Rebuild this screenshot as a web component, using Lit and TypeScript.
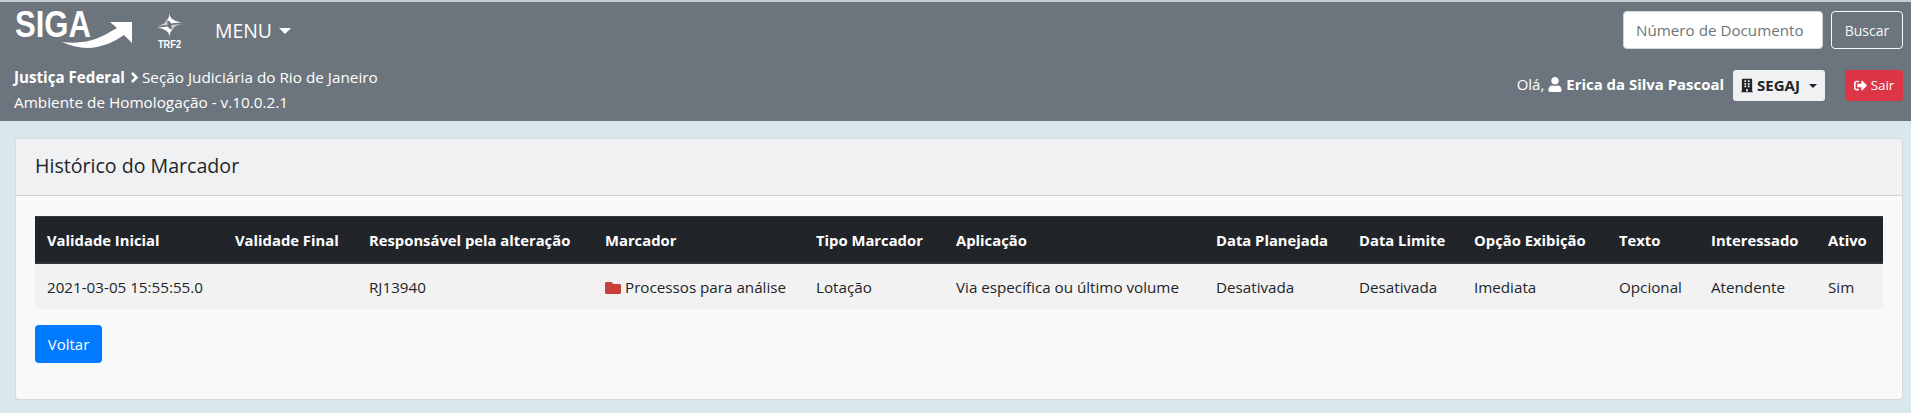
import { LitElement, html, css } from 'lit';
import { customElement } from 'lit/decorators.js';

interface Column {
  title: string;
  width: number;
}

const COLUMNS: Column[] = [
  { title: 'Validade Inicial', width: 188 },
  { title: 'Validade Final', width: 134 },
  { title: 'Responsável pela alteração', width: 236 },
  { title: 'Marcador', width: 211 },
  { title: 'Tipo Marcador', width: 140 },
  { title: 'Aplicação', width: 260 },
  { title: 'Data Planejada', width: 143 },
  { title: 'Data Limite', width: 115 },
  { title: 'Opção Exibição', width: 145 },
  { title: 'Texto', width: 92 },
  { title: 'Interessado', width: 117 },
  { title: 'Ativo', width: 67 },
];

const ROW = [
  '2021-03-05 15:55:55.0',
  '',
  'RJ13940',
  'Processos para análise',
  'Lotação',
  'Via específica ou último volume',
  'Desativada',
  'Desativada',
  'Imediata',
  'Opcional',
  'Atendente',
  'Sim',
];

const icon = (box: string, d: string, cls = 'icon') =>
  html`<svg class=${cls} viewBox=${box} fill="currentColor"><path d=${d}></path></svg>`;

const USER =
  'M224 256c70.7 0 128-57.3 128-128S294.7 0 224 0 96 57.3 96 128s57.3 128 128 128zm89.6 32h-16.7c-22.2 10.2-46.9 16-72.9 16s-50.6-5.8-72.9-16h-16.7C60.2 288 0 348.2 0 422.4V464c0 26.5 21.5 48 48 48h352c26.5 0 48-21.5 48-48v-41.6c0-74.2-60.2-134.4-134.4-134.4z';
const FOLDER =
  'M464 128H272l-64-64H48C21.49 64 0 85.49 0 112v288c0 26.51 21.49 48 48 48h416c26.51 0 48-21.49 48-48V176c0-26.51-21.49-48-48-48z';
const BUILDING =
  'M436 480h-20V24c0-13.255-10.745-24-24-24H56C42.745 0 32 10.745 32 24v456H12c-6.627 0-12 5.373-12 12v20h448v-20c0-6.627-5.373-12-12-12zM128 76c0-6.627 5.373-12 12-12h40c6.627 0 12 5.373 12 12v40c0 6.627-5.373 12-12 12h-40c-6.627 0-12-5.373-12-12V76zm0 96c0-6.627 5.373-12 12-12h40c6.627 0 12 5.373 12 12v40c0 6.627-5.373 12-12 12h-40c-6.627 0-12-5.373-12-12v-40zm52 148h-40c-6.627 0-12-5.373-12-12v-40c0-6.627 5.373-12 12-12h40c6.627 0 12 5.373 12 12v40c0 6.627-5.373 12-12 12zm76 160h-64v-84c0-6.627 5.373-12 12-12h40c6.627 0 12 5.373 12 12v84zm64-172c0 6.627-5.373 12-12 12h-40c-6.627 0-12-5.373-12-12v-40c0-6.627 5.373-12 12-12h40c6.627 0 12 5.373 12 12v40zm0-96c0 6.627-5.373 12-12 12h-40c-6.627 0-12-5.373-12-12v-40c0-6.627 5.373-12 12-12h40c6.627 0 12 5.373 12 12v40zm0-96c0 6.627-5.373 12-12 12h-40c-6.627 0-12-5.373-12-12V76c0-6.627 5.373-12 12-12h40c6.627 0 12 5.373 12 12v40z';
const SIGN_OUT =
  'M497 273L329 441c-15 15-41 4.5-41-17v-96H152c-13.3 0-24-10.7-24-24v-96c0-13.3 10.7-24 24-24h136V88c0-21.4 25.9-32 41-17l168 168c9.3 9.4 9.3 24.6 0 34zM192 436v-40c0-6.6-5.4-12-12-12H96c-17.7 0-32-14.3-32-32V160c0-17.7 14.3-32 32-32h84c6.6 0 12-5.4 12-12V76c0-6.6-5.4-12-12-12H96c-53 0-96 43-96 96v192c0 53 43 96 96 96h84c6.6 0 12-5.4 12-12z';

@customElement('app-root')
export class AppRoot extends LitElement {
  static styles = css`
    :host {
      display: block;
      min-height: 413px;
      background: #d9e8ea;
      color: #212529;
      font-family: 'Open Sans', 'Noto Sans', sans-serif;
      font-size: 15.2px;
      line-height: 21px;
    }
    .topbar {
      height: 121px;
      box-sizing: border-box;
      background: #6c757d;
      border-top: 2px solid #c9ced2;
      color: #fff;
      padding: 9px 8px 0 14px;
      display: flex;
      flex-direction: column;
    }
    .row {
      display: flex;
      justify-content: space-between;
    }
    .brand {
      display: flex;
      align-items: flex-start;
    }
    .logo {
      width: 122px;
      height: 48px;
      margin-top: -11px;
      overflow: visible;
    }
    .logo text {
      font-family: 'Liberation Sans', sans-serif;
      font-weight: 700;
      fill: #fff;
    }
    .trf {
      width: 30px;
      height: 48px;
      margin: -1px 0 0 20px;
    }
    .trf text {
      font-family: 'Liberation Sans', sans-serif;
      font-weight: 700;
      font-size: 10px;
      fill: #fff;
    }
    .menu {
      margin: 6px 0 0 29px;
      font-size: 19.4px;
      line-height: 27px;
      display: flex;
      align-items: center;
      gap: 7px;
    }
    .caret {
      display: inline-block;
      width: 0;
      height: 0;
      border-top: 6px solid currentColor;
      border-left: 6px solid transparent;
      border-right: 6px solid transparent;
    }
    .search {
      display: flex;
      gap: 8px;
    }
    .search input {
      width: 200px;
      height: 38px;
      box-sizing: border-box;
      border: 1px solid #ced4da;
      border-radius: 4px;
      padding: 0 12px;
      background: #fff;
      font: inherit;
      font-size: 15.2px;
    }
    .search input::placeholder {
      color: #6c757d;
    }
    .btn-outline {
      width: 72px;
      height: 38px;
      box-sizing: border-box;
      border: 1px solid #f8f9fa;
      border-radius: 4px;
      background: transparent;
      color: #f8f9fa;
      font: inherit;
      font-size: 14px;
      padding: 0;
    }
    .info {
      margin-top: 1px;
      align-items: flex-start;
    }
    .place {
      margin-top: 6px;
      line-height: 25px;
      font-size: 15.3px;
      white-space: nowrap;
    }
    .place b {
      font-size: 15.15px;
    }
    .chev {
      width: 9px;
      height: 11px;
      margin: 0 -1px 0 1px;
    }
    .user {
      display: flex;
      align-items: center;
      height: 31px;
      margin-top: 11px;
      font-size: 14.95px;
    }
    .user .icon {
      width: 14px;
      height: 15px;
    }
    .hello {
      display: flex;
      align-items: center;
      gap: 4px;
      padding-bottom: 2px;
    }
    .unit {
      margin-left: 9px;
      width: 92px;
      height: 31px;
      box-sizing: border-box;
      border: 0;
      border-radius: 3px;
      background: #f0f1f2;
      color: #212529;
      font: inherit;
      font-size: 15px;
      font-weight: 700;
      display: flex;
      align-items: center;
      justify-content: center;
      gap: 4px;
      padding: 0;
    }
    .unit .icon {
      width: 12px;
      height: 15px;
    }
    .unit .caret {
      border-top-width: 4px;
      border-left-width: 4px;
      border-right-width: 4px;
      margin-left: 5px;
    }
    .exit {
      margin-left: 20px;
      width: 58px;
      height: 31px;
      box-sizing: border-box;
      border: 0;
      border-radius: 3px;
      background: #dc3545;
      color: #fff;
      font: inherit;
      font-size: 13.3px;
      display: flex;
      align-items: center;
      justify-content: center;
      gap: 4px;
      padding: 0;
    }
    .exit .icon {
      width: 13px;
      height: 13px;
    }
    .page {
      padding: 17px 8px 13px 15px;
    }
    .card {
      background: #f8f9fa;
      border: 1px solid rgba(0, 0, 0, 0.125);
      border-radius: 4px;
      height: 262px;
      box-sizing: border-box;
    }
    .card-header {
      height: 57px;
      box-sizing: border-box;
      background: #f0f1f2;
      border-bottom: 1px solid rgba(0, 0, 0, 0.125);
      border-radius: 3px 3px 0 0;
      padding: 0 19px 4px;
      display: flex;
      align-items: center;
    }
    .card-header h5 {
      margin: 0;
      font-size: 19.6px;
      font-weight: 400;
    }
    .card-body {
      padding: 20px 19px 0;
    }
    table {
      width: 1848px;
      table-layout: fixed;
      border-collapse: collapse;
    }
    th,
    td {
      padding: 13px 12px 11px;
      text-align: left;
      vertical-align: top;
      white-space: nowrap;
    }
    th {
      background: #212529;
      color: #fff;
      font-size: 14.8px;
      font-weight: 700;
      border-top: 1px solid #32383e;
      border-bottom: 2px solid #32383e;
    }
    td {
      background: #f2f2f2;
      height: 45px;
      box-sizing: border-box;
    }
    .folder {
      width: 16px;
      height: 16px;
      color: #c9403a;
      vertical-align: -3px;
      margin-right: 4px;
    }
    .back {
      display: block;
      margin-top: 16px;
      width: 67px;
      height: 38px;
      border: 0;
      border-radius: 4px;
      background: #007bff;
      color: #fff;
      font: inherit;
      font-size: 15px;
      padding: 0;
    }
  `;

  private renderLogo() {
    return html`<svg class="logo" viewBox="14 0 122 48">
      <text x="15" y="37" font-size="37" textLength="76" lengthAdjust="spacingAndGlyphs">SIGA</text>
      <path
        fill="#fff"
        d="M62 42C75 43.5 88 42.5 98 38 105 35 111 31.5 117 28L110 22H132V43L124 35C117 40 107 45 97 47 85 49.5 73 47 62 42Z"
      ></path>
    </svg>`;
  }

  private renderTrf() {
    return html`<svg class="trf" viewBox="0 0 30 48">
      <g fill="#fff">
        <path d="M13.500 2C13.500 7 15 10.500 26 12.500 20 13 16.500 13 15 13.500 14 11 12.500 10.500 10.500 11 12.500 9 13.500 6 13.500 2Z"></path>
        <path d="M13.500 28C13.500 23 12 19.500 1 17.500 7 17 10.500 17 12 16.500 13 19 14.500 19.500 16.500 19 14.500 21 13.500 24 13.500 28Z"></path>
        <path opacity=".65" d="M26 14C20.500 15 17.500 16.500 15.500 22 16 18.500 15.500 16.500 15.500 15 18 14.500 22 14.500 26 14Z"></path>
        <path opacity=".65" d="M1 16C6.500 15 9.500 13.500 11.500 8 11 11.500 11.500 13.500 11.500 15 9 15.500 5 15.500 1 16Z"></path>
      </g>
      <text x="2" y="38" textLength="23" lengthAdjust="spacingAndGlyphs">TRF2</text>
    </svg>`;
  }

  render() {
    return html`
      <header class="topbar">
        <div class="row">
          <div class="brand">
            ${this.renderLogo()} ${this.renderTrf()}
            <div class="menu">MENU <span class="caret"></span></div>
          </div>
          <form class="search" @submit=${(e: Event) => e.preventDefault()}>
            <input placeholder="Número de Documento" />
            <button class="btn-outline">Buscar</button>
          </form>
        </div>
        <div class="row info">
          <div class="place">
            <div>
              <b>Justiça Federal</b>
              <svg class="chev" viewBox="0 0 9 11" fill="none" stroke="#fff" stroke-width="2.6">
                <path d="M2 1l4.500 4.500L2 10"></path>
              </svg>
              Seção Judiciária do Rio de Janeiro
            </div>
            <div>Ambiente de Homologação - v.10.0.2.1</div>
          </div>
          <div class="user">
            <span class="hello">Olá, ${icon('0 0 448 512', USER)} <b>Erica da Silva Pascoal</b></span>
            <button class="unit">
              ${icon('0 0 448 512', BUILDING)} SEGAJ <span class="caret"></span>
            </button>
            <button class="exit">${icon('0 0 512 512', SIGN_OUT)} Sair</button>
          </div>
        </div>
      </header>
      <main class="page">
        <section class="card">
          <div class="card-header"><h5>Histórico do Marcador</h5></div>
          <div class="card-body">
            <table>
              <colgroup>
                ${COLUMNS.map((c) => html`<col style="width: ${c.width}px" />`)}
              </colgroup>
              <thead>
                <tr>
                  ${COLUMNS.map((c) => html`<th>${c.title}</th>`)}
                </tr>
              </thead>
              <tbody>
                <tr>
                  ${ROW.map(
                    (value, i) =>
                      html`<td>${i === 3 ? icon('0 0 512 512', FOLDER, 'folder') : ''}${value}</td>`
                  )}
                </tr>
              </tbody>
            </table>
            <button class="back">Voltar</button>
          </div>
        </section>
      </main>
    `;
  }
}
